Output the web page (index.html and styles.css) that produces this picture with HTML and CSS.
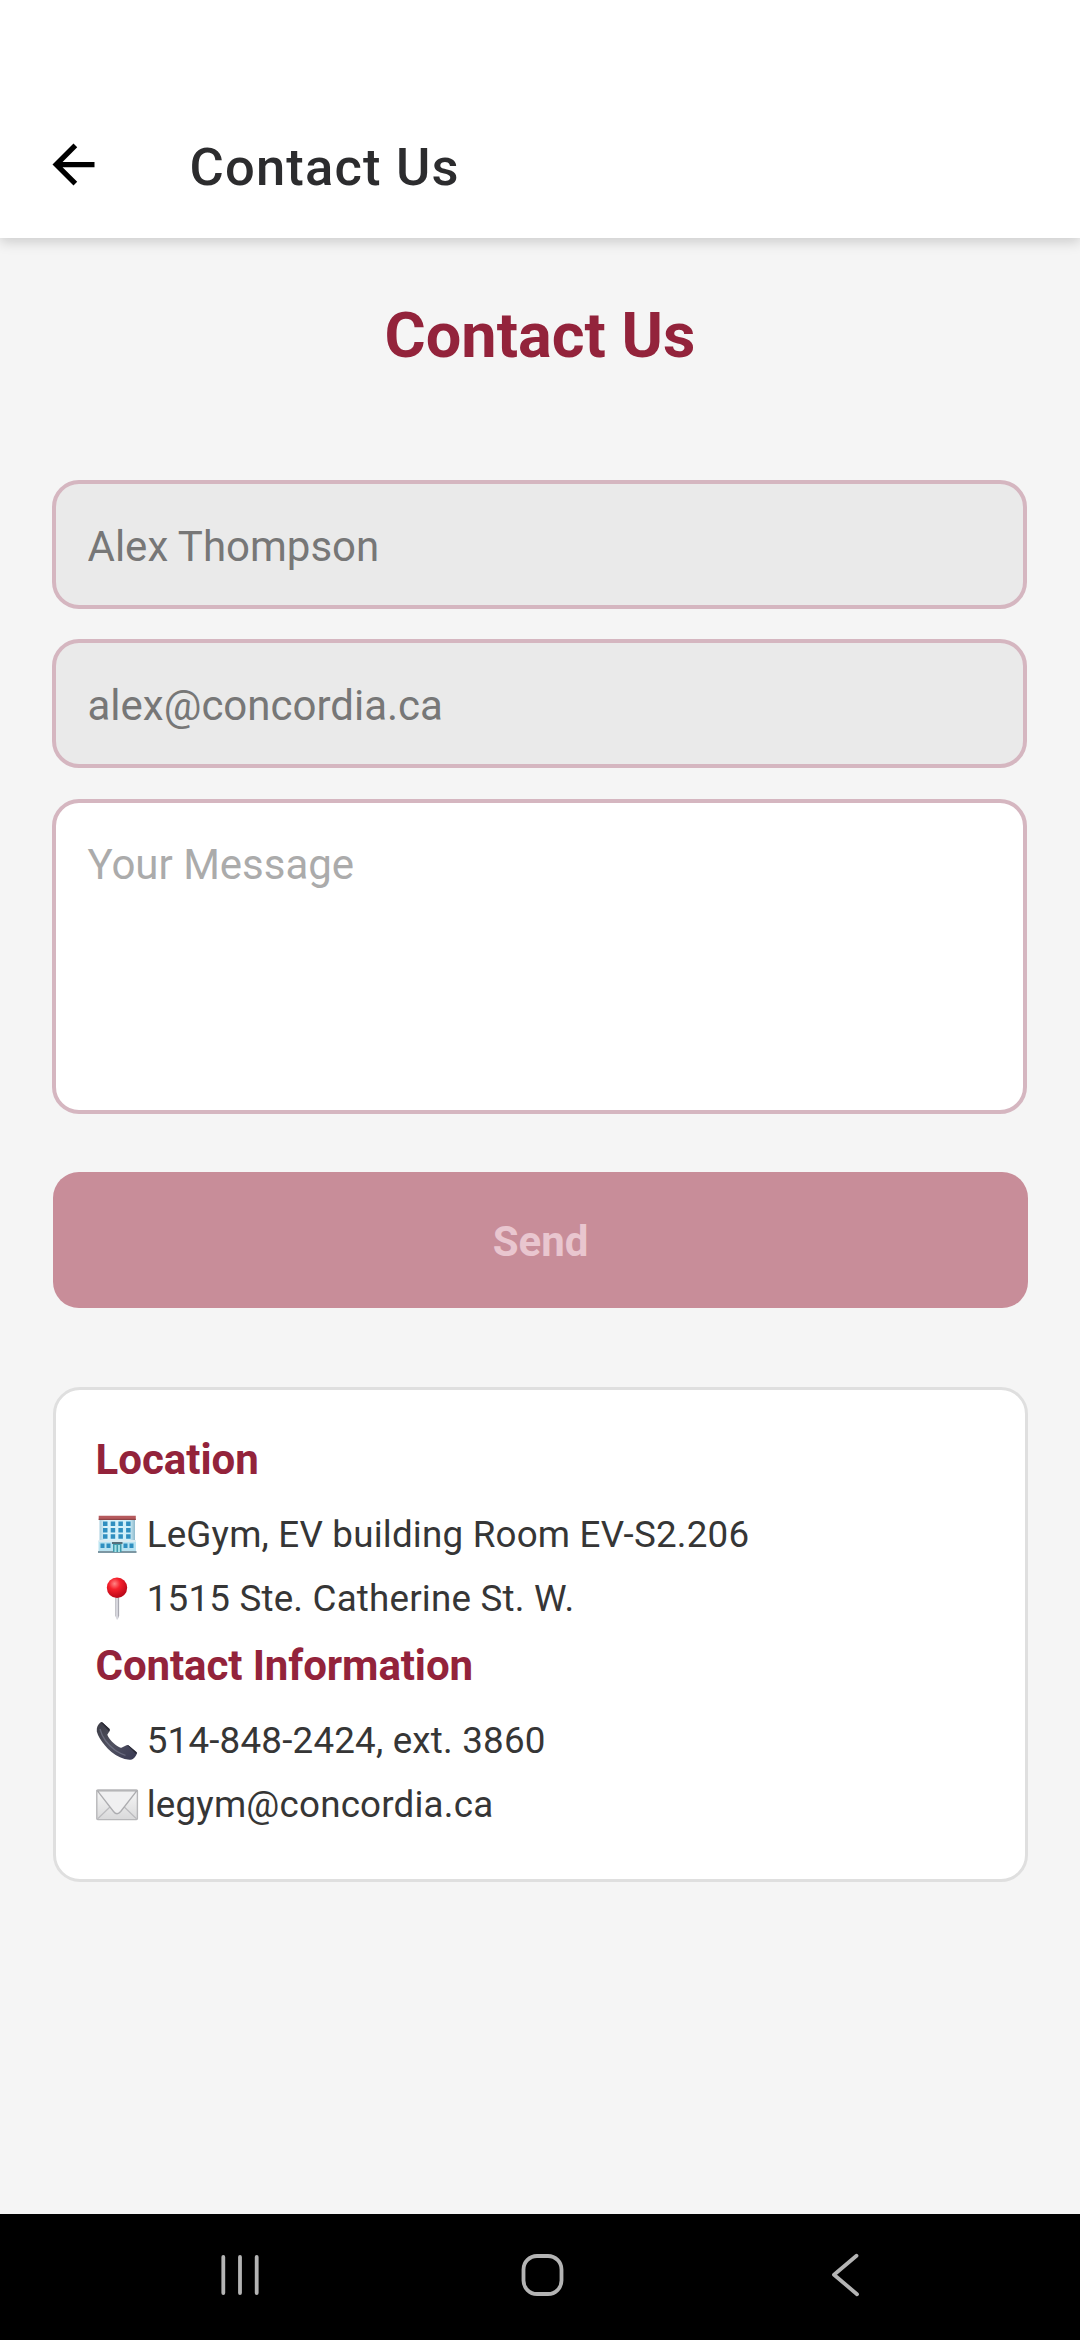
FILE: index.html
```html
<!DOCTYPE html>
<html lang="en">
<head>
<meta charset="utf-8">
<title>Contact Us</title>
<link rel="stylesheet" href="styles.css">
</head>
<body>
<div class="screen">
  <header class="app-bar">
    <svg class="back" viewBox="0 0 24 24"><path d="M20 11H7.83l5.59-5.59L12 4l-8 8 8 8 1.41-1.41L7.83 13H20v-2z"/></svg>
    <span class="app-title">Contact Us</span>
  </header>
  <main class="content">
    <h1 class="heading">Contact Us</h1>
    <form class="form">
      <input class="field" type="text" value="Alex Thompson" disabled>
      <input class="field" type="text" value="alex@concordia.ca" disabled>
      <textarea class="field message" placeholder="Your Message"></textarea>
      <button class="send" type="button" disabled>Send</button>
    </form>
    <section class="card">
      <h2 class="card-heading">Location</h2>
      <p class="row">
        <svg class="icon" viewBox="0 0 43 43">
          <defs><linearGradient id="wall" x1="0" x2="1" y1="0" y2="0"><stop offset="0" stop-color="#a9cfdf"/><stop offset=".15" stop-color="#d9f3fb"/><stop offset=".85" stop-color="#cdeef9"/><stop offset="1" stop-color="#8fb9cb"/></linearGradient></defs>
          <path fill="url(#wall)" d="M3.5 5h35.500v22.500H3.500z"/>
          <path fill="#b65a5d" d="M2.700 2.800h37.100v4H2.700z"/>
          <path fill="#8f4447" d="M2.700 5.800h37.100v1.200H2.700z"/>
          <path fill="#b9e3f1" d="M2.500 28h37.500v10H2.500z"/>
          <path fill="#dcebf0" d="M2.500 27h37.500v2H2.500z"/>
          <path fill="#7d97a3" d="M2 38h38.500v2H2z"/>
          <g fill="#2f8fc0">
            <path d="M7 8.500h4.500V13H7zM14.700 8.500h4.500V13h-4.500zM22.400 8.500h4.500V13h-4.500zM30.100 8.500h4.500V13h-4.500z"/>
            <path d="M7 15h4.500v4.500H7zM14.700 15h4.500v4.500h-4.500zM22.400 15h4.500v4.500h-4.500zM30.100 15h4.500v4.500h-4.500z"/>
            <path d="M7 21.300h4.500v4.500H7zM14.700 21.300h4.500v4.500h-4.500zM22.400 21.300h4.500v4.500h-4.500zM30.100 21.300h4.500v4.500h-4.500z"/>
            <path d="M4.500 30.500h4V35h-4zM10.500 30.500h4V35h-4zM27.500 30.500h4V35h-4zM33.500 30.500h4V35h-4z"/>
          </g>
          <path fill="#56707c" d="M16 29h10.500v2H16z"/>
          <path fill="#419cad" d="M17 31h8.500v8H17z"/>
          <path fill="#a6e0e6" d="M18.500 32h2v7h-2zM22 32h2v7h-2z"/>
        </svg>
        <span>LeGym, EV building Room EV-S2.206</span>
      </p>
      <p class="row">
        <svg class="icon" viewBox="0 0 43 43">
          <defs>
            <radialGradient id="ball" cx=".38" cy=".3" r=".7"><stop offset="0" stop-color="#ff8585"/><stop offset=".4" stop-color="#f5202c"/><stop offset="1" stop-color="#b90718"/></radialGradient>
            <linearGradient id="pin" x1="0" x2="1" y1="0" y2="0"><stop offset="0" stop-color="#a4a4ac"/><stop offset=".45" stop-color="#ececf2"/><stop offset="1" stop-color="#8e8e98"/></linearGradient>
          </defs>
          <path fill="url(#pin)" d="M19.300 19h3.800v19.500l-1.300 4h-1.200l-1.300-4z"/>
          <circle cx="21" cy="10.800" r="10.200" fill="url(#ball)"/>
        </svg>
        <span>1515 Ste. Catherine St. W.</span>
      </p>
      <h2 class="card-heading second">Contact Information</h2>
      <p class="row">
        <svg class="icon" viewBox="0 0 43 43">
          <defs><linearGradient id="phone" x1="0" x2="1" y1="0" y2="1"><stop offset="0" stop-color="#3c3c46"/><stop offset=".5" stop-color="#505160"/><stop offset="1" stop-color="#383853"/></linearGradient></defs>
          <path fill="url(#phone)" d="M4.700 3.300Q5.600 2.600 6.500 3.500L13.600 10Q14.300 10.800 13.600 12L11.300 15.700C13 20.500 18.500 25.600 23 28Q24.700 29.300 25.900 28.400L30.500 26.300Q31.800 25.700 32.700 26.500L40.500 33Q41.700 34 40.600 35.200C39 38.500 37 40.800 33.500 40.800Q28.500 40.500 24 38.300Q15 34 9 26.400Q2.500 19 .8 12.500C.4 8.500 2 5.200 4.700 3.300z"/>
          <path fill="none" stroke="#85869a" stroke-width="1.300" opacity=".55" d="M4 10C6 18 12 26 19.500 31.500Q25 35 29.500 36.300"/>
          <path fill="#292934" d="M4.900 3.400 6.500 3.500 13.600 10 13.200 12.600zM31.300 26.200l1.400.3 8 6.900-.6 1.600z"/>
        </svg>
        <span>514-848-2424, ext. 3860</span>
      </p>
      <p class="row">
        <svg class="icon" viewBox="0 0 43 43">
          <defs><linearGradient id="paper" x1="0" x2="0" y1="0" y2="1"><stop offset="0" stop-color="#f7f7f7"/><stop offset="1" stop-color="#d9d9da"/></linearGradient></defs>
          <rect x=".8" y="7" width="40.600" height="29.600" rx="1" fill="url(#paper)" stroke="#b7b7b9" stroke-width="1.400"/>
          <path fill="none" stroke="#bcbcbf" stroke-width="1.200" d="M1.500 36 15.500 22.500M40.700 36 26.700 22.500"/>
          <path fill="#f0f0f1" stroke="#adadb0" stroke-width="1.300" d="M1.500 7.800 17.500 28.500Q21 33 24.700 28.500L40.700 7.800z"/>
        </svg>
        <span>legym@concordia.ca</span>
      </p>
    </section>
  </main>
  <nav class="nav-bar">
    <svg class="nav-icon" viewBox="0 0 44 44"><path d="M5.300 4v36M22 4v36M38.700 4v36"/></svg>
    <svg class="nav-icon" viewBox="0 0 44 44"><rect x="2.500" y="3" width="38" height="38" rx="13.500"/></svg>
    <svg class="nav-icon" viewBox="0 0 44 44"><path d="M33.500 2.700 11 21.700 34 41.200"/></svg>
  </nav>
</div>
</body>
</html>
```

FILE: styles.css
```css
* { box-sizing: border-box; margin: 0; }

body {
  background: #f5f5f5;
  font-family: Roboto, sans-serif;
}

.screen {
  display: flex;
  flex-direction: column;
  width: 1080px;
  height: 2340px;
  overflow: hidden;
}

.app-bar {
  display: flex;
  align-items: flex-start;
  height: 238px;
  padding: 133px 42px 0;
  background: #fff;
  box-shadow: 0 4px 12px rgba(0, 0, 0, .17);
}

.back { width: 63px; height: 63px; margin-right: 84.500px; fill: #000; }

.app-title {
  margin-top: 3px;
  font-size: 52.500px;
  font-weight: 500;
  line-height: 62px;
  letter-spacing: 1.180px;
  color: #2c2c2e;
}

.content { flex: 1; padding: 60px 52px 0; }

.heading {
  font-size: 63px;
  font-weight: 700;
  line-height: 76px;
  text-align: center;
  color: #93233b;
}

.form { display: flex; flex-direction: column; margin-top: 106px; }

.field {
  display: block;
  width: 975px;
  height: 129px;
  margin-bottom: 30px;
  padding: 39px 31.500px 36px;
  border: 4px solid #d5b6c0;
  border-radius: 27px;
  background: #eaeaea;
  font: 400 42px/50px Roboto, sans-serif;
  color: #777;
}

.field + .field.message { margin-top: 1px; }

.message {
  height: 315px;
  margin-bottom: 58px;
  padding-top: 37px;
  background: #fff;
  resize: none;
  overflow: hidden;
}

.message::placeholder { color: #ababab; }

.send {
  width: 975px;
  height: 136px;
  margin-left: 1px;
  padding: 4px 0 0;
  border: 0;
  border-radius: 26px;
  background: #c88d99;
  font: 700 42px/50px Roboto, sans-serif;
  color: #e9c6cf;
}

.card {
  width: 975px;
  height: 495px;
  margin: 79px 0 0 1px;
  padding: 45px 39.500px 0;
  border: 3px solid #dfdfdf;
  border-radius: 27px;
  background: #fff;
}

.card-heading {
  margin-bottom: 17.500px;
  font-size: 42px;
  font-weight: 700;
  line-height: 50px;
  color: #93233b;
}

.card-heading.second { margin-top: 10.500px; letter-spacing: -.1px; }

.row {
  display: flex;
  align-items: center;
  height: 64px;
  gap: 8.200px;
  font-size: 36.750px;
  line-height: 64px;
  letter-spacing: .2px;
  white-space: nowrap;
  color: #363636;
}

.icon { width: 43px; height: 43px; flex: none; }

.nav-bar {
  display: flex;
  justify-content: space-between;
  height: 126px;
  padding: 39px 213px 0 218px;
  background: #000;
}

.nav-icon {
  width: 44px;
  height: 44px;
  fill: none;
  stroke: #b4b4b4;
  stroke-width: 3.800;
  stroke-linecap: round;
  stroke-linejoin: round;
}
```
